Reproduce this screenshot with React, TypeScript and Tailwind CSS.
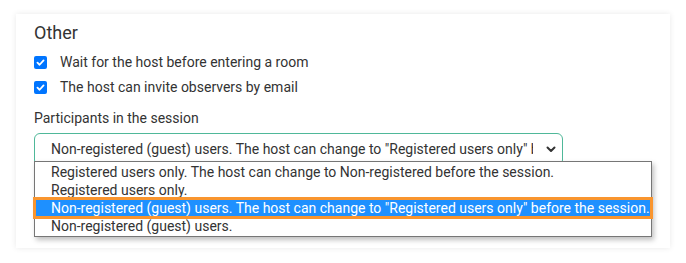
const options = [
  "Registered users only. The host can change to Non-registered before the session.",
  "Registered users only.",
  'Non-registered (guest) users. The host can change to "Registered users only" before the session.',
  "Non-registered (guest) users.",
];

const selected = 2;

function Check({ label }: { label: string }) {
  return (
    <label className="flex items-center h-[25px]">
      <span className="w-[13px] h-[13px] rounded-[2px] bg-[#0075ff] flex items-center justify-center">
        <svg width="9" height="9" viewBox="0 0 10 10" fill="none">
          <path d="M1.6 5.2 L4 7.5 L8.4 2.6" stroke="white" strokeWidth="2" strokeLinecap="round" strokeLinejoin="round" />
        </svg>
      </span>
      <span className="ml-[13px]">{label}</span>
    </label>
  );
}

export default function App() {
  return (
    <div className="w-[686px] h-[263px] bg-white pl-[16px] pt-[14px] text-[14px] text-[#333] [font-family:Roboto,'Liberation_Sans',sans-serif]">
      <div className="w-[654px] h-[234px] bg-white shadow-[0_0_6px_rgba(0,0,0,0.09)] pl-[18px] pt-[8px] relative">
        <div className="overflow-hidden h-[226px]">
          <h2 className="text-[18px] leading-[22px] text-[#333]">Other</h2>
          <div className="mt-[6px]">
            <Check label="Wait for the host before entering a room" />
            <Check label="The host can invite observers by email" />
          </div>
          <div className="mt-[9px] leading-[18px]">Participants in the session</div>
          <div className="mt-[6px] w-[529px] h-[33px] border border-[#4fb899] rounded-[6px] flex items-center pl-[16px] pr-[6px]">
            <span className="flex-1 overflow-hidden whitespace-nowrap">{options[selected]}</span>
            <svg className="ml-[13px]" width="10" height="7" viewBox="0 0 10 7" fill="none">
              <path d="M1.5 1.5 L5 5 L8.5 1.5" stroke="#333" strokeWidth="2" strokeLinecap="round" strokeLinejoin="round" />
            </svg>
          </div>
          <div className="mt-[84px] text-[#555] leading-[18px]">Allow the host to record the session with all participants</div>
        </div>

        <ul className="absolute left-[18px] top-[147px] w-[618px] border border-[#767676] bg-white shadow-[2px_3px_5px_rgba(0,0,0,0.25)] py-[1px]">
          {options.map((o, i) => (
            <li
              key={o}
              className={
                i === selected
                  ? "h-[18px] leading-[18px] pl-[16px] whitespace-nowrap bg-[#1e90ff] text-white outline-[3px] outline-solid outline-[#f9952e] -outline-offset-1 relative"
                  : "h-[18px] leading-[18px] pl-[16px] whitespace-nowrap"
              }
            >
              {o}
            </li>
          ))}
        </ul>
      </div>
    </div>
  );
}
